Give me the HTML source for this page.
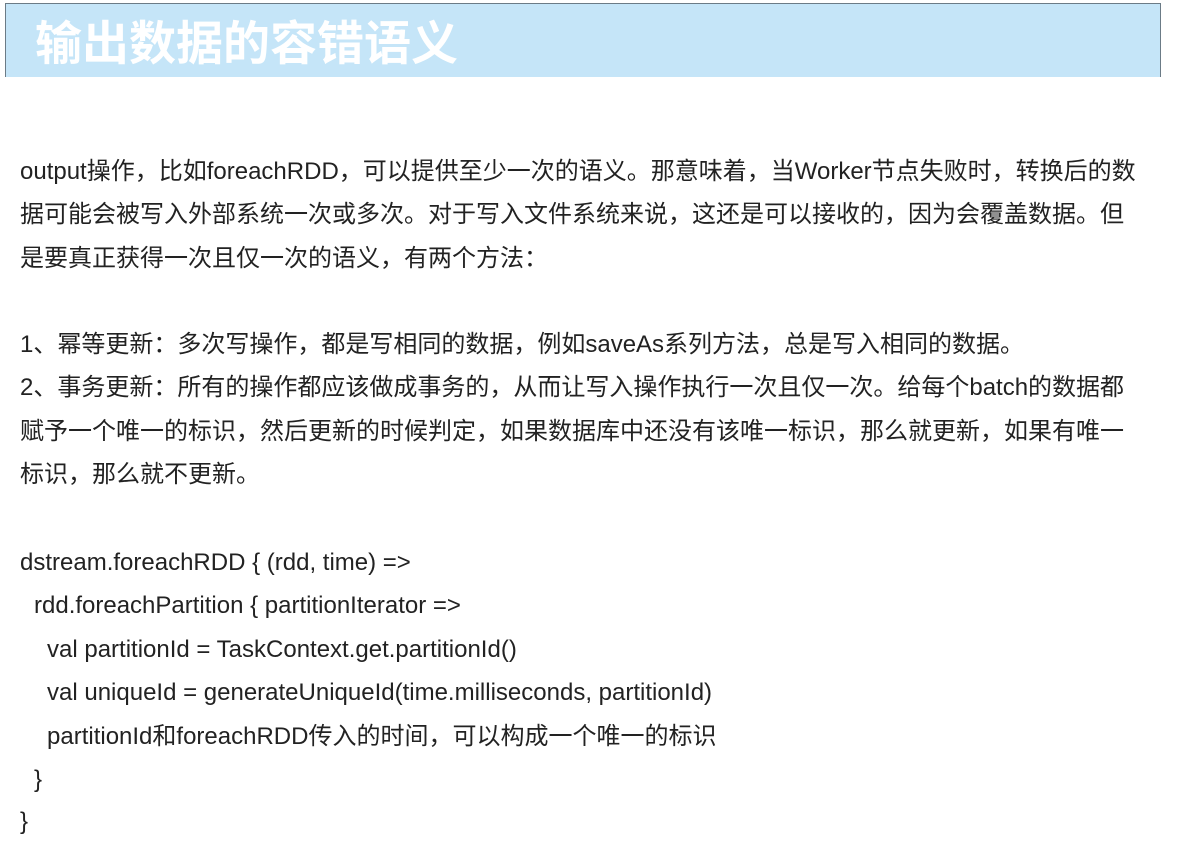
<!DOCTYPE html>
<html><head><meta charset="utf-8"><style>
body{margin:0;background:#fff;width:1187px;height:843px;overflow:hidden;font-family:"Liberation Sans","Noto Sans CJK SC",sans-serif;}
.hd{position:absolute;left:5px;top:3px;width:1154px;height:73px;background:#c5e5f8;border:1px solid #6b7b86;border-bottom:none;}
.hd span{position:absolute;left:29px;top:5px;color:#fff;font-weight:bold;font-size:47px;line-height:62px;letter-spacing:0px;font-family:"Noto Sans CJK SC",sans-serif;}
.t{position:absolute;left:20px;font-size:24px;color:#222;white-space:nowrap;line-height:26px;}
</style></head><body>
<div class="hd"><span>输出数据的容错语义</span></div>
<div class="t" style="top:159px">output操作，比如foreachRDD，可以提供至少一次的语义。那意味着，当Worker节点失败时，转换后的数</div>
<div class="t" style="top:202px">据可能会被写入外部系统一次或多次。对于写入文件系统来说，这还是可以接收的，因为会覆盖数据。但</div>
<div class="t" style="top:246px">是要真正获得一次且仅一次的语义，有两个方法：</div>
<div class="t" style="top:332px">1、幂等更新：多次写操作，都是写相同的数据，例如saveAs系列方法，总是写入相同的数据。</div>
<div class="t" style="top:375px">2、事务更新：所有的操作都应该做成事务的，从而让写入操作执行一次且仅一次。给每个batch的数据都</div>
<div class="t" style="top:419px">赋予一个唯一的标识，然后更新的时候判定，如果数据库中还没有该唯一标识，那么就更新，如果有唯一</div>
<div class="t" style="top:462px">标识，那么就不更新。</div>
<div class="t" style="top:550px">dstream.foreachRDD { (rdd, time) =&gt;</div>
<div class="t" style="top:593px;left:34px">rdd.foreachPartition { partitionIterator =&gt;</div>
<div class="t" style="top:637px;left:47px">val partitionId = TaskContext.get.partitionId()</div>
<div class="t" style="top:680px;left:47px">val uniqueId = generateUniqueId(time.milliseconds, partitionId)</div>
<div class="t" style="top:724px;left:47px">partitionId和foreachRDD传入的时间，可以构成一个唯一的标识</div>
<div class="t" style="top:767px;left:34px">}</div>
<div class="t" style="top:809px">}</div>
</body></html>
